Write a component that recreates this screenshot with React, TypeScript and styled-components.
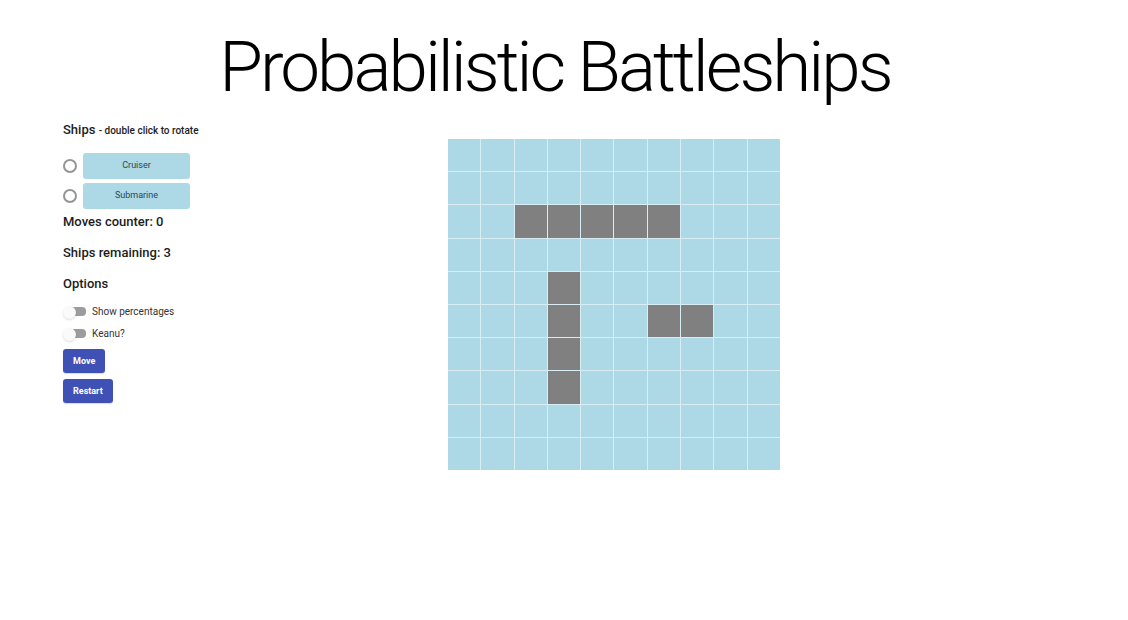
import { useState } from "react";
import styled, { createGlobalStyle } from "styled-components";

const GlobalStyle = createGlobalStyle`
  *, *::before, *::after { box-sizing: border-box; }
  body {
    margin: 0;
    background: #ffffff;
    color: #1c1c1c;
    font-family: Roboto, "Liberation Sans", sans-serif;
  }
`;

const Page = styled.div`
  padding: 25px 18px 24px 0;
`;

const Title = styled.h1`
  margin: 0;
  text-align: center;
  font-size: 71px;
  font-weight: 300;
  line-height: 84px;
  letter-spacing: -3px;
  color: #000000;
`;

const Layout = styled.div`
  display: flex;
  align-items: flex-start;
  padding: 11px 82px 0 63px;
`;

const Sidebar = styled.aside`
  flex: none;
  width: 137px;
`;

const Heading = styled.h2`
  margin: 0;
  padding-bottom: 12px;
  font-size: 13px;
  font-weight: 500;
  line-height: 20px;
  white-space: nowrap;
`;

const Hint = styled.small`
  font-size: 10px;
`;

const ShipList = styled.div`
  display: flex;
  flex-direction: column;
  gap: 4px;
  padding-bottom: 3px;
`;

const ShipRow = styled.div`
  display: flex;
  align-items: center;
  gap: 6px;
`;

const Radio = styled.input`
  appearance: none;
  width: 14px;
  height: 14px;
  margin: 0;
  border: 2px solid #959595;
  border-radius: 50%;
  background: #ffffff;
  &:checked {
    background: radial-gradient(#3f51b5 40%, #ffffff 50%);
    border-color: #3f51b5;
  }
`;

const ShipButton = styled.button`
  width: 107px;
  height: 26px;
  padding: 0 0 2px;
  border: 0;
  border-radius: 3px;
  background: #add8e6;
  color: #2a4650;
  font: 400 9px/16px Roboto, "Liberation Sans", sans-serif;
`;

const Stat = styled.p`
  margin: 0;
  padding-bottom: 11px;
  font-size: 13px;
  font-weight: 500;
  line-height: 20px;
`;

const Options = styled.section`
  display: flex;
  flex-direction: column;
  align-items: flex-start;
`;

const OptionsHeading = styled.h2`
  margin: 0;
  padding-bottom: 7px;
  font-size: 13px;
  font-weight: 500;
  line-height: 20px;
`;

const SwitchLabel = styled.label`
  display: flex;
  align-items: center;
  gap: 5px;
  font-size: 10px;
  line-height: 22px;
  color: #333333;
`;

const Switch = styled.input`
  appearance: none;
  position: relative;
  width: 24px;
  height: 14px;
  margin: 0;
  &::before {
    content: "";
    position: absolute;
    inset: 2px 1px 3px 4px;
    border-radius: 4px;
    background: #9c9c9c;
  }
  &::after {
    content: "";
    position: absolute;
    top: 1px;
    left: 0;
    width: 13px;
    height: 13px;
    border-radius: 50%;
    background: #fafafa;
    box-shadow: 0 1px 2px rgba(0, 0, 0, 0.14);
  }
  &:checked::after {
    left: 11px;
    background: #3f51b5;
  }
`;

const Actions = styled.div`
  display: flex;
  flex-direction: column;
  align-items: flex-start;
  gap: 6px;
  padding-top: 4px;
`;

const ActionButton = styled.button`
  height: 24px;
  padding: 0 10px;
  border: 0;
  border-radius: 3px;
  background: #3f51b5;
  color: #ffffff;
  font: 700 9px/16px Roboto, "Liberation Sans", sans-serif;
  box-shadow: 0 1px 1px rgba(0, 0, 0, 0.14);
`;

const Main = styled.main`
  flex: 1;
  display: flex;
  justify-content: center;
  padding-top: 19px;
`;

const Board = styled.div`
  display: grid;
  grid-template-columns: repeat(10, 1fr);
  grid-template-rows: repeat(10, 1fr);
  gap: 1px;
  width: 100%;
  max-width: 332px;
  aspect-ratio: 332 / 331;
  background: #d8eef4;
`;

const Cell = styled.div<{ $ship: boolean }>`
  background: ${({ $ship }) => ($ship ? "#808080" : "#add8e6")};
`;

const ships = ["Cruiser", "Submarine"];
const options = ["Show percentages", "Keanu?"];

const occupied = new Set([
  22, 23, 24, 25, 26,
  43, 53, 63, 73,
  56, 57,
]);

export default function App() {
  const [moves, setMoves] = useState(0);

  return (
    <>
      <GlobalStyle />
      <Page>
        <Title>Probabilistic Battleships</Title>
        <Layout>
          <Sidebar>
            <Heading>
              Ships <Hint>- double click to rotate</Hint>
            </Heading>
            <ShipList>
              {ships.map((ship) => (
                <ShipRow key={ship}>
                  <Radio type="radio" name="ship" value={ship} aria-label={ship} />
                  <ShipButton type="button">{ship}</ShipButton>
                </ShipRow>
              ))}
            </ShipList>
            <Stat>Moves counter: {moves}</Stat>
            <Stat>Ships remaining: 3</Stat>
            <Options>
              <OptionsHeading>Options</OptionsHeading>
              {options.map((option) => (
                <SwitchLabel key={option}>
                  <Switch type="checkbox" role="switch" />
                  {option}
                </SwitchLabel>
              ))}
            </Options>
            <Actions>
              <ActionButton type="button" onClick={() => setMoves(moves + 1)}>
                Move
              </ActionButton>
              <ActionButton type="button" onClick={() => setMoves(0)}>
                Restart
              </ActionButton>
            </Actions>
          </Sidebar>
          <Main>
            <Board>
              {Array.from({ length: 100 }, (_, i) => (
                <Cell key={i} $ship={occupied.has(i)} />
              ))}
            </Board>
          </Main>
        </Layout>
      </Page>
    </>
  );
}
